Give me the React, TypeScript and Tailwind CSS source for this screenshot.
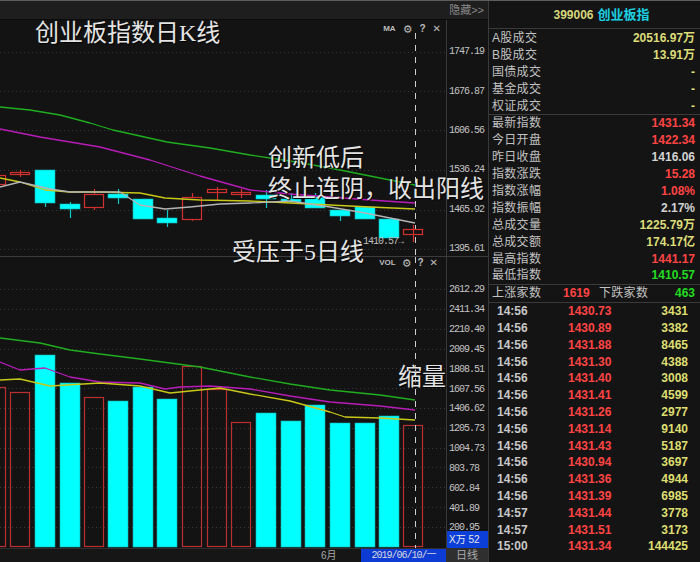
import React from "react";

type Candle = { c: number; o: number; b: number; hi?: number; lo?: number; up: boolean };

const candles: Candle[] = [
  { c: -4, o: 175, b: 185, up: true },
  { c: 20, o: 172, b: 175, hi: 170, lo: 177, up: true },
  { c: 45, o: 170, b: 203, lo: 207, up: false },
  { c: 70, o: 204, b: 209, hi: 202, lo: 218, up: false },
  { c: 94, o: 194, b: 208, hi: 189, lo: 210, up: true },
  { c: 118, o: 194, b: 198, hi: 189, lo: 204, up: false },
  { c: 143, o: 199, b: 219, up: false },
  { c: 167, o: 218, b: 223, hi: 210, lo: 227, up: false },
  { c: 192, o: 197, b: 220, hi: 193, lo: 221, up: true },
  { c: 217, o: 189, b: 193, hi: 187, lo: 200, up: true },
  { c: 241, o: 192, b: 195, hi: 189, lo: 198, up: true },
  { c: 266, o: 195, b: 199, hi: 190, lo: 208, up: false },
  { c: 291, o: 199, b: 202, hi: 193, lo: 203, up: false },
  { c: 315, o: 197, b: 208, hi: 193, up: false },
  { c: 340, o: 210, b: 216, lo: 221, up: false },
  { c: 365, o: 207, b: 219, up: false },
  { c: 389, o: 219, b: 238, up: false },
  { c: 413, o: 229, b: 235, hi: 225, lo: 242, up: true },
];

const vols: [number, number, boolean][] = [
  [-4, 387, true], [20, 392, true], [45, 355, false], [70, 383, false], [94, 397, true],
  [118, 401, false], [143, 387, false], [167, 399, false], [192, 366, true], [217, 389, true],
  [241, 422, true], [266, 413, false], [291, 421, false], [315, 405, false], [340, 423, false],
  [365, 423, false], [389, 416, false], [413, 425, true],
];

const mainGreen = "0,107 30,110 60,115 90,123 113,130 140,136 167,142 210,148 250,155 290,161 330,168 370,176 415,185";
const mainMagenta = "0,129 40,137 70,142 100,147 150,160 200,176 250,190 290,194 330,197 370,200 415,203";
const mainYellow = "0,178 20,182 45,190 70,192 100,192 140,193 165,198 200,200 250,201 290,203 330,205 370,207 415,209";
const mainWhite = "0,187 20,182 50,189 70,192 100,192 120,192 140,205 165,209 190,207 220,204 250,203 290,201 330,207 365,213 415,223";

const volGreen = "0,338 40,343 70,350 100,354 140,359 200,367 250,377 290,384 330,390 380,395 415,400";
const volMagenta = "0,362 20,370 45,368 70,377 100,382 140,383 165,389 180,387 210,386 250,389 290,396 330,402 380,406 415,410";
const volYellow = "0,380 20,379 50,386 100,383 140,386 170,393 200,390 220,388 250,394 290,401 330,412 345,417 380,418 415,420";

const mainAxis = ["1747.19", "1676.87", "1606.56", "1536.24", "1465.92", "1395.61"];
const mainGrid = [52, 91, 130, 170, 210, 249];
const volAxis = ["2612.29", "2411.34", "2210.40", "2009.45", "1808.51", "1607.56", "1406.62", "1205.73", "1004.73", "803.78", "602.84", "401.89", "200.95"];
const volGrid = [289, 309, 329, 349, 368, 388, 408, 428, 448, 467, 487, 507, 527];

const YEL = "text-[#dcdc78]";
const RED = "text-[#ff4444]";
const GRY = "text-[#d2d2d2]";
const GRN = "text-[#22dd22]";

const info1: [string, string, string][] = [
  ["A股成交", "20516.97万", YEL],
  ["B股成交", "13.91万", YEL],
  ["国债成交", "-", YEL],
  ["基金成交", "-", YEL],
  ["权证成交", "-", YEL],
];

const info2: [string, string, string][] = [
  ["最新指数", "1431.34", RED],
  ["今日开盘", "1422.34", RED],
  ["昨日收盘", "1416.06", GRY],
  ["指数涨跌", "15.28", RED],
  ["指数涨幅", "1.08%", RED],
  ["指数振幅", "2.17%", GRY],
  ["总成交量", "1225.79万", YEL],
  ["总成交额", "174.17亿", YEL],
  ["最高指数", "1441.17", RED],
  ["最低指数", "1410.57", GRN],
];

const ticks: [string, string, string][] = [
  ["14:56", "1430.73", "3431"],
  ["14:56", "1430.89", "3382"],
  ["14:56", "1431.88", "8465"],
  ["14:56", "1431.30", "4388"],
  ["14:56", "1431.40", "3008"],
  ["14:56", "1431.41", "4599"],
  ["14:56", "1431.26", "2977"],
  ["14:56", "1431.14", "9140"],
  ["14:56", "1431.43", "5187"],
  ["14:56", "1430.94", "3697"],
  ["14:56", "1431.36", "4944"],
  ["14:56", "1431.39", "6985"],
  ["14:57", "1431.44", "3778"],
  ["14:57", "1431.51", "3173"],
  ["15:00", "1431.34", "144425"],
];

const RED_STROKE = "#d03030";
const CYAN = "#00ffff";

function CandleShape({ k }: { k: Candle }) {
  const x = k.c + 0.5;
  if (k.up) {
    return (
      <g stroke={RED_STROKE} strokeWidth={1.2} fill="none">
        {k.hi !== undefined && <line x1={x} x2={x} y1={k.hi} y2={k.o} />}
        {k.lo !== undefined && <line x1={x} x2={x} y1={k.b} y2={k.lo} />}
        <rect x={k.c - 9.5} y={k.o + 0.5} width={19} height={Math.max(k.b - k.o - 1, 1)} fill="#121212" />
        {k.hi !== undefined && k.lo !== undefined && k.b - k.o < 8 && <line x1={x} x2={x} y1={k.o} y2={k.b} />}
      </g>
    );
  }
  return (
    <g>
      {(k.hi !== undefined || k.lo !== undefined) && (
        <line x1={x} x2={x} y1={k.hi ?? k.o} y2={k.lo ?? k.b} stroke="#10c8c8" strokeWidth={1.2} />
      )}
      <rect x={k.c - 10} y={k.o} width={20} height={k.b - k.o} fill={CYAN} stroke="#18b0b0" strokeWidth={0.6} />
    </g>
  );
}

function Lines({ pts }: { pts: [string, string][] }) {
  return (
    <>
      {pts.map(([p, c], i) => (
        <polyline key={i} points={p} fill="none" stroke={c} strokeWidth={1.3} strokeLinejoin="round" />
      ))}
    </>
  );
}

function InfoRow({ label, value, color, h }: { label: string; value: string; color: string; h: string }) {
  return (
    <div className={`${h} flex items-center justify-between pl-[3px] pr-[5px]`}>
      <span className="text-[12px] leading-none text-[#c2c2c2] tracking-[0.3px]">{label}</span>
      <span className={`text-[12px] leading-none font-bold ${color}`}>{value}</span>
    </div>
  );
}

export default function App() {
  return (
    <div className="w-[700px] h-[562px] flex bg-[#131313] border-t border-[#5c5c5c] overflow-hidden font-['Liberation_Sans','Noto_Sans_CJK_SC',sans-serif]">
      {/* LEFT: chart */}
      <div className="relative w-[488px] h-full flex flex-col">
        <div className="h-[19px] shrink-0 bg-[#1e1e1e] border-b border-[#0c0c0c] flex items-center justify-end pr-[4px]">
          <span className="text-[11px] leading-none text-[#8a8a8a]">隐藏&gt;&gt;</span>
        </div>

        {/* main K panel */}
        <div className="h-[236px] shrink-0 flex">
          <div className="relative w-[446px] h-full">
            <svg width="446" height="236" viewBox="0 20 446 236" className="block">
              {mainGrid.map((y) => (
                <line key={y} x1={0} x2={446} y1={y + 0.5} y2={y + 0.5} stroke="#3a3a3a" strokeDasharray="1 3" />
              ))}
              <line x1={415.5} x2={415.5} y1={33} y2={256} stroke="#cfcfcf" strokeDasharray="6 6" />
              {candles.map((k, i) => (
                <CandleShape key={i} k={k} />
              ))}
              <Lines
                pts={[
                  [mainGreen, "#1fae1f"],
                  [mainMagenta, "#b81cb8"],
                  [mainYellow, "#c8c81a"],
                  [mainWhite, "#b4b4b4"],
                ]}
              />
              <text x={363} y={244} fontSize={10} fill="#bdbdbd" fontFamily="Liberation Mono, monospace" letterSpacing={-1}>
                1410.57→
              </text>
            </svg>
            <div className="absolute top-[4px] right-[5px] h-[10px] flex items-center gap-[7px] leading-none text-[#bdbdbd]">
              <span className="text-[8px] font-bold">MA</span>
              <span className="text-[11px] font-['DejaVu_Sans',sans-serif]">⚙</span>
              <span className="text-[10px] font-bold">?</span>
              <span className="text-[10px] font-['DejaVu_Sans',sans-serif]">✕</span>
            </div>
          </div>
          <div className="w-[42px] h-full overflow-visible border-l border-[#3a3a3a] flex flex-col pt-[12px] pl-[2px]">
            {mainAxis.map((v) => (
              <div key={v} className="h-[39.4px] shrink-0 flex items-center text-[10px] tracking-[-1px] text-[#c4c4c4] font-['Liberation_Mono',monospace]">
                {v}
              </div>
            ))}
          </div>
        </div>

        {/* volume panel */}
        <div className="h-[292px] shrink-0 border-t border-[#3c3c3c] flex">
          <div className="relative w-[446px] h-full">
            <svg width="446" height="291" viewBox="0 257 446 291" className="block">
              {volGrid.map((y) => (
                <line key={y} x1={0} x2={446} y1={y + 0.5} y2={y + 0.5} stroke="#3a3a3a" strokeDasharray="1 3" />
              ))}
              {vols.map(([c, top, up], i) =>
                up ? (
                  <rect key={i} x={c - 9.5} y={top + 0.5} width={19} height={546 - top} fill="none" stroke="#b83030" strokeWidth={1.2} />
                ) : (
                  <rect key={i} x={c - 10} y={top} width={20} height={547 - top} fill={CYAN} stroke="#18b0b0" strokeWidth={0.6} />
                )
              )}
              <line x1={415.5} x2={415.5} y1={257} y2={548} stroke="#cfcfcf" strokeDasharray="6 6" />
              <Lines
                pts={[
                  [volGreen, "#1fae1f"],
                  [volMagenta, "#b81cb8"],
                  [volYellow, "#c8c81a"],
                ]}
              />
            </svg>
            <div className="absolute top-[1px] right-[8px] h-[10px] flex items-center gap-[6px] leading-none text-[#bdbdbd]">
              <span className="text-[8px] font-bold">VOL</span>
              <span className="text-[11px] font-['DejaVu_Sans',sans-serif]">⚙</span>
              <span className="text-[10px] font-bold">?</span>
              <span className="text-[10px] font-['DejaVu_Sans',sans-serif]">✕</span>
            </div>
          </div>
          <div className="relative w-[42px] border-l border-[#3a3a3a] flex flex-col pt-[23px] pl-[2px]">
            {volAxis.map((v) => (
              <div key={v} className="h-[19.83px] shrink-0 flex items-center text-[10px] tracking-[-1px] text-[#c4c4c4] font-['Liberation_Mono',monospace]">
                {v}
              </div>
            ))}
            <div className="absolute left-0 right-0 bottom-0 h-[17px] bg-[#0b3fd8] flex items-center pl-[2px] text-[10px] leading-none text-[#e8e8e8]">
              X万 52
            </div>
          </div>
        </div>

        {/* bottom axis */}
        <div className="h-[14px] shrink-0 border-t border-[#2e2e2e] bg-[#161616] flex items-center text-[10px] leading-none">
          <div className="w-[321px]" />
          <div className="w-[40px] text-[#a8a8a8]">6月</div>
          <div className="w-[85px] h-full bg-[#0d3cd4] flex items-center justify-center text-[#d8d8d8] font-['Liberation_Mono','Noto_Sans_CJK_SC',monospace] tracking-[-1px]">
            2019/06/10/一
          </div>
          <div className="w-[42px] h-full bg-[#2f2f2f] flex items-center justify-center text-[#aaaaaa] text-[11px]">日线</div>
        </div>

        {/* annotations */}
        <div className="pointer-events-none absolute left-[35px] top-[20px] text-[24px] leading-none text-[#e4e4e4] whitespace-nowrap font-['Liberation_Serif','Noto_Sans_CJK_SC',serif] [text-shadow:1px_1px_1px_#000]">
          创业板指数日K线
        </div>
        <div className="pointer-events-none absolute left-[268px] top-[145px] text-[24px] leading-none text-[#e4e4e4] whitespace-nowrap font-['Liberation_Serif','Noto_Sans_CJK_SC',serif] [text-shadow:1px_1px_1px_#000]">
          创新低后
        </div>
        <div className="pointer-events-none absolute left-[268px] top-[176px] text-[24px] leading-none text-[#e4e4e4] whitespace-nowrap font-['Liberation_Serif','Noto_Sans_CJK_SC',serif] [text-shadow:1px_1px_1px_#000]">
          终止连阴，收出阳线
        </div>
        <div className="pointer-events-none absolute left-[232px] top-[239px] text-[24px] leading-none text-[#e4e4e4] whitespace-nowrap font-['Liberation_Serif','Noto_Sans_CJK_SC',serif] [text-shadow:1px_1px_1px_#000]">
          受压于5日线
        </div>
        <div className="pointer-events-none absolute left-[398px] top-[364px] text-[24px] leading-none text-[#e4e4e4] whitespace-nowrap font-['Liberation_Serif','Noto_Sans_CJK_SC',serif] [text-shadow:1px_1px_1px_#000]">
          缩量
        </div>
      </div>

      {/* RIGHT: quote panel */}
      <div className="w-[212px] h-full border-l border-[#3a3a3a] flex flex-col bg-[#141414]">
        <div className="h-[28px] shrink-0 border-b border-[#3a3a3a] flex items-center justify-center pl-[14px] gap-[4px] leading-none">
          <span className="text-[12px] font-bold text-[#d6d67a]">399006</span>
          <span className="text-[13px] font-bold text-[#1ccfe0]">创业板指</span>
        </div>
        <div className="shrink-0 border-b border-[#3a3a3a]">
          {info1.map(([l, v, c]) => (
            <InfoRow key={l} label={l} value={v} color={c} h="h-[17px]" />
          ))}
        </div>
        <div className="shrink-0 border-b border-[#3a3a3a]">
          {info2.map(([l, v, c]) => (
            <InfoRow key={l} label={l} value={v} color={c} h="h-[16.9px]" />
          ))}
        </div>
        <div className="h-[18px] shrink-0 border-b border-[#3a3a3a] flex items-center leading-none">
          <span className="w-[74px] pl-[3px] text-[12px] text-[#c2c2c2] tracking-[0.3px]">上涨家数</span>
          <span className="w-[36px] text-[12px] font-bold text-[#ff4444]">1619</span>
          <span className="text-[12px] text-[#c2c2c2] tracking-[0.3px]">下跌家数</span>
          <span className="ml-auto pr-[5px] text-[12px] font-bold text-[#22dd22]">463</span>
        </div>
        <div className="flex flex-col">
          {ticks.map(([t, p, v], i) => (
            <div key={i} className="h-[16.8px] shrink-0 flex items-center text-[12px] font-bold leading-none">
              <span className="w-[79px] pl-[8px] text-[#c8c8c8]">{t}</span>
              <span className="text-[#ff4444]">{p}</span>
              <span className="ml-auto pr-[12px] text-[#dede70]">{v}</span>
            </div>
          ))}
        </div>
      </div>
    </div>
  );
}
